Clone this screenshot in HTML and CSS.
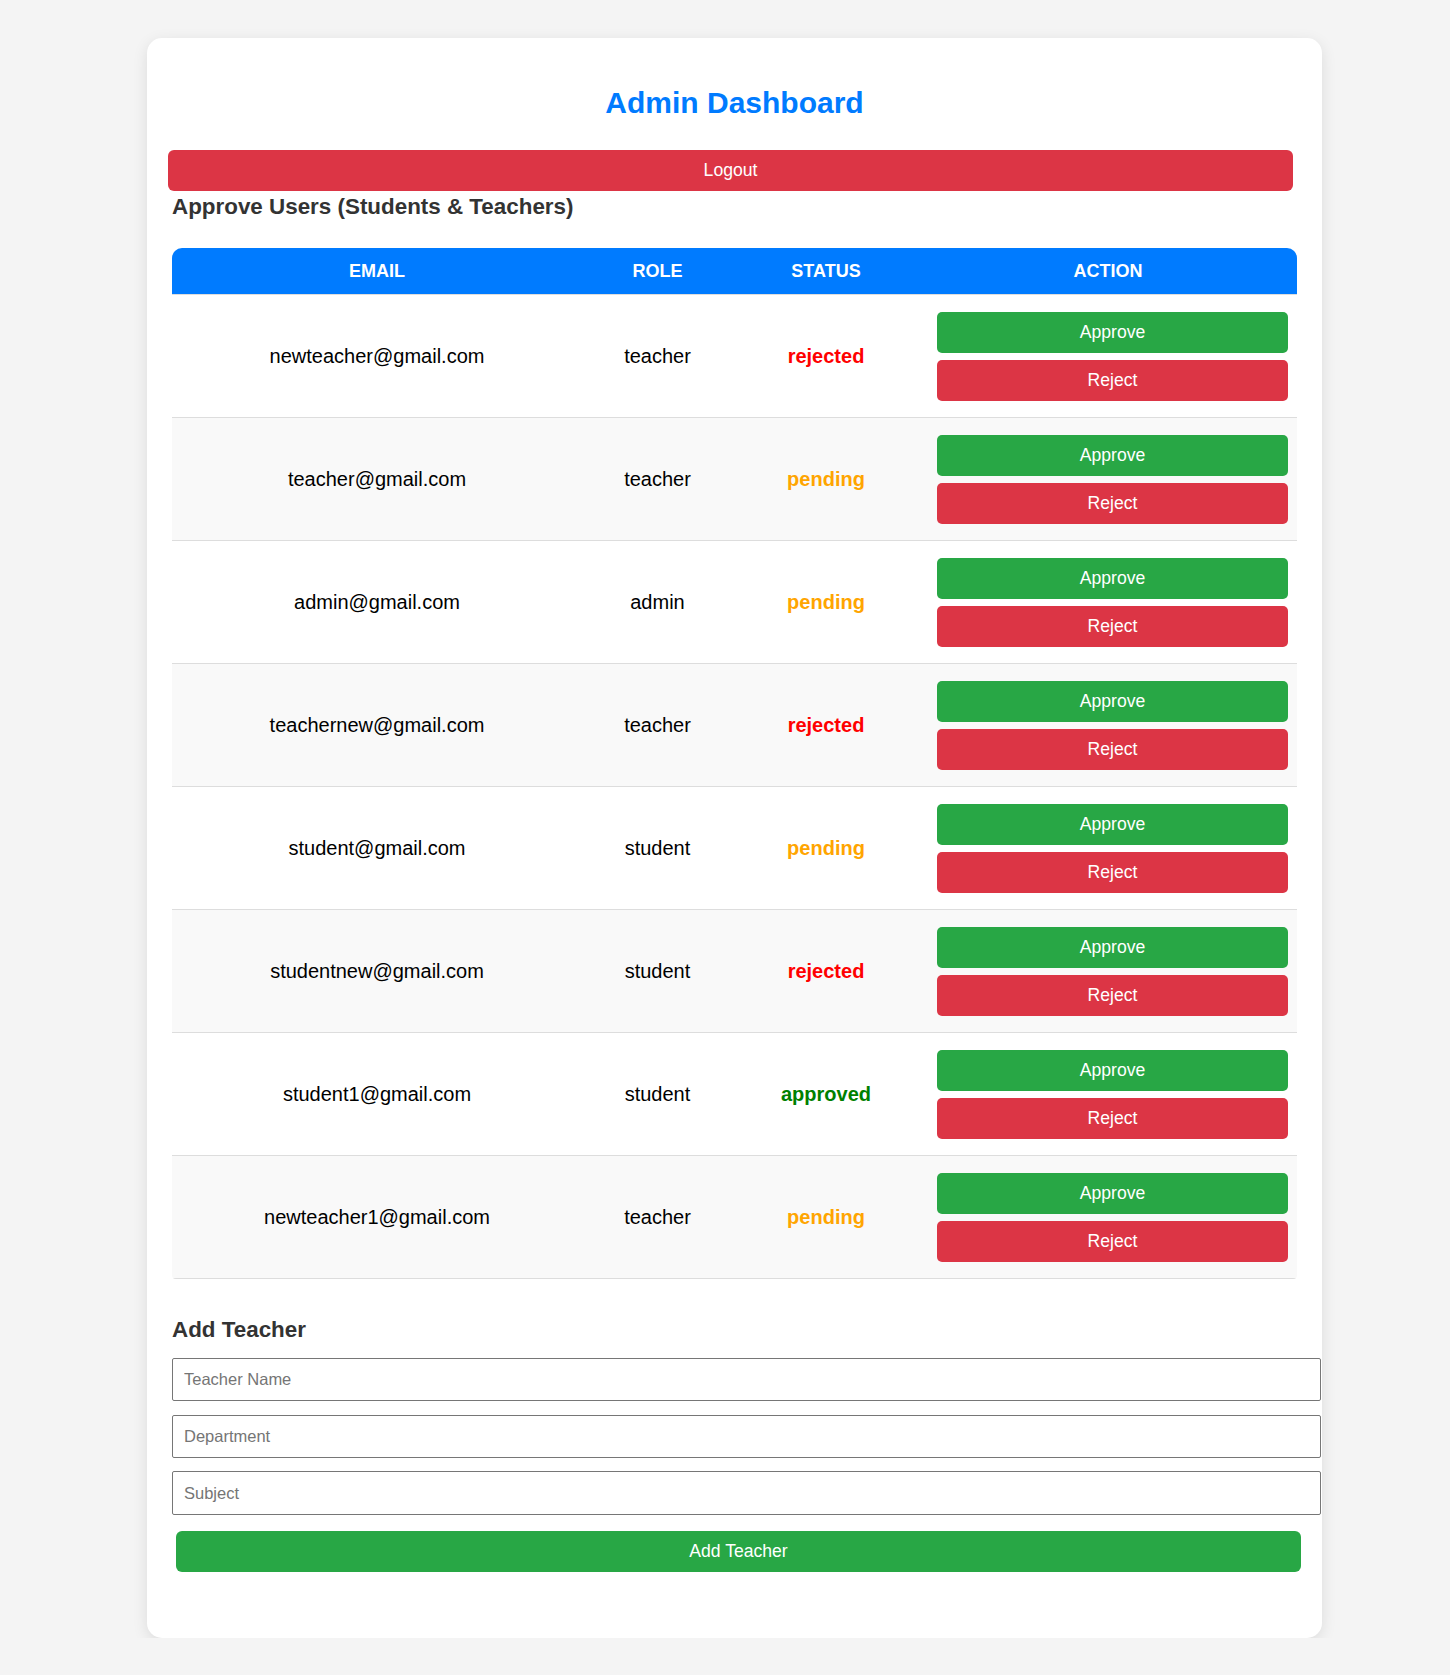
FILE: index.html
```html
<!DOCTYPE html>
<html lang="en">
<head>
<meta charset="utf-8">
<title>Admin Dashboard</title>
<link rel="stylesheet" href="styles.css">
</head>
<body>
<div class="container">
  <h1 class="title">Admin Dashboard</h1>
  <button class="btn btn-logout">Logout</button>
  <h2 class="section-title">Approve Users (Students &amp; Teachers)</h2>
  <div class="table-wrap">
    <table class="users">
      <colgroup>
        <col class="c-email"><col class="c-role"><col class="c-status"><col class="c-action">
      </colgroup>
      <thead>
        <tr><th>Email</th><th>Role</th><th>Status</th><th>Action</th></tr>
      </thead>
      <tbody>
        <tr><td>newteacher@gmail.com</td><td>teacher</td><td class="st st-rejected">rejected</td><td class="actions"><div class="action-stack"><button class="btn btn-approve">Approve</button><button class="btn btn-reject">Reject</button></div></td></tr>
        <tr><td>teacher@gmail.com</td><td>teacher</td><td class="st st-pending">pending</td><td class="actions"><div class="action-stack"><button class="btn btn-approve">Approve</button><button class="btn btn-reject">Reject</button></div></td></tr>
        <tr><td>admin@gmail.com</td><td>admin</td><td class="st st-pending">pending</td><td class="actions"><div class="action-stack"><button class="btn btn-approve">Approve</button><button class="btn btn-reject">Reject</button></div></td></tr>
        <tr><td>teachernew@gmail.com</td><td>teacher</td><td class="st st-rejected">rejected</td><td class="actions"><div class="action-stack"><button class="btn btn-approve">Approve</button><button class="btn btn-reject">Reject</button></div></td></tr>
        <tr><td>student@gmail.com</td><td>student</td><td class="st st-pending">pending</td><td class="actions"><div class="action-stack"><button class="btn btn-approve">Approve</button><button class="btn btn-reject">Reject</button></div></td></tr>
        <tr><td>studentnew@gmail.com</td><td>student</td><td class="st st-rejected">rejected</td><td class="actions"><div class="action-stack"><button class="btn btn-approve">Approve</button><button class="btn btn-reject">Reject</button></div></td></tr>
        <tr><td>student1@gmail.com</td><td>student</td><td class="st st-approved">approved</td><td class="actions"><div class="action-stack"><button class="btn btn-approve">Approve</button><button class="btn btn-reject">Reject</button></div></td></tr>
        <tr><td>newteacher1@gmail.com</td><td>teacher</td><td class="st st-pending">pending</td><td class="actions"><div class="action-stack"><button class="btn btn-approve">Approve</button><button class="btn btn-reject">Reject</button></div></td></tr>
      </tbody>
    </table>
  </div>
  <h2 class="section-title add-title">Add Teacher</h2>
  <form class="add-form">
    <input class="field" type="text" placeholder="Teacher Name">
    <input class="field" type="text" placeholder="Department">
    <input class="field" type="text" placeholder="Subject">
  </form>
  <button class="btn btn-add">Add Teacher</button>
</div>
</body>
</html>
```

FILE: styles.css
```css
html, body {
  margin: 0;
  padding: 0;
}
body {
  background: #f4f4f4;
  font-family: "Liberation Sans", Arial, sans-serif;
  color: #000;
}
.container {
  box-sizing: border-box;
  width: 1175px;
  margin: 38px 0 0 147px;
  padding: 25px 25px 66px;
  background: #fff;
  border-radius: 15px;
  box-shadow: 0 4px 15px rgba(0, 0, 0, 0.1);
}
.title {
  margin: 23px 0 30px;
  font-size: 30px;
  line-height: 34px;
  font-weight: bold;
  text-align: center;
  color: #007bff;
}
.btn {
  display: block;
  box-sizing: border-box;
  border: none;
  padding: 0;
  color: #fff;
  font-family: "Liberation Sans", Arial, sans-serif;
  font-size: 17.6px;
  line-height: 41px;
  height: 41px;
  text-align: center;
  cursor: pointer;
}
.btn-logout {
  width: 100%;
  margin-left: -4px;
  background: #dc3545;
  border-radius: 6px;
}
.section-title {
  margin: 3px 0 29px;
  font-size: 22.4px;
  line-height: 25px;
  font-weight: bold;
  color: #333;
}
.table-wrap {
  border-radius: 10px 10px 4px 4px;
  overflow: hidden;
}
.users {
  width: 100%;
  border-collapse: collapse;
  table-layout: fixed;
}
.c-email { width: 410px; }
.c-role { width: 151px; }
.c-status { width: 186px; }
.c-action { width: 378px; }
.users th {
  background: #007bff;
  color: #fff;
  font-size: 18px;
  font-weight: bold;
  text-transform: uppercase;
  line-height: 22px;
  padding: 12px 0;
  border-bottom: 1px solid #ddd;
  text-align: center;
}
.users td {
  font-size: 20px;
  text-align: center;
  vertical-align: middle;
  padding: 0;
  border-bottom: 1px solid #ddd;
}
.users tbody tr:nth-child(even) {
  background: #f9f9f9;
}
.st { font-weight: bold; }
.st-rejected { color: #ff0000; }
.st-pending { color: #ffa500; }
.st-approved { color: #008000; }
.users td.actions {
  padding: 17px 9px 16px 18px;
}
.action-stack {
  display: flex;
  flex-direction: column;
  gap: 7px;
}
.btn-approve,
.btn-reject {
  width: 100%;
  border-radius: 5px;
}
.btn-approve { background: #28a745; }
.btn-reject { background: #dc3545; }
.add-title {
  margin: 38px 0 16px;
}
.add-form {
  display: flex;
  flex-direction: column;
  gap: 13.4px;
  margin: 0;
}
.field {
  box-sizing: border-box;
  width: calc(100% + 24px);
  height: 43.3px;
  margin: 0;
  padding: 0 11px;
  border: 1px solid #767676;
  border-radius: 2px;
  font-family: "Liberation Sans", Arial, sans-serif;
  font-size: 16.5px;
  color: #000;
  background: #fff;
}
.field::placeholder {
  color: #757575;
}
.btn-add {
  width: 100%;
  margin: 16.3px 0 0 4px;
  background: #28a745;
  border-radius: 6px;
}
```
